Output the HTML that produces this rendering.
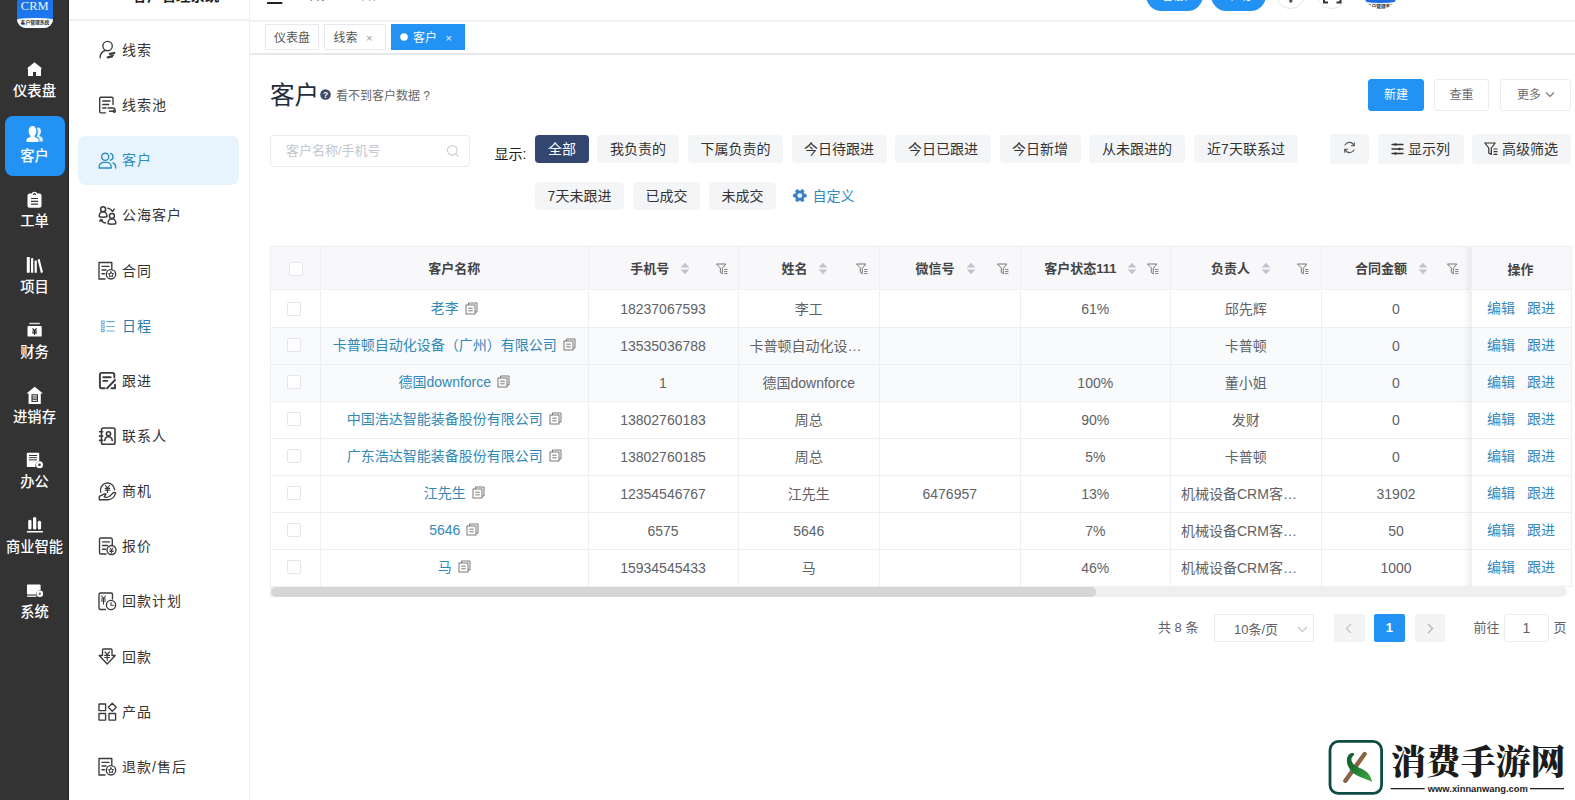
<!DOCTYPE html>
<html lang="zh-CN">
<head>
<meta charset="utf-8">
<title>客户 - CRM客户管理系统</title>
<style>
*{box-sizing:border-box;margin:0;padding:0}
html,body{width:1575px;height:800px;overflow:hidden;background:#fff}
body{position:relative;font-family:"Liberation Sans","Noto Sans CJK SC",sans-serif;font-size:14px;color:#606266;-webkit-font-smoothing:antialiased}
.abs{position:absolute}
svg{display:block;overflow:visible}
/* ---------- dark rail ---------- */
#rail{position:absolute;left:0;top:0;width:69px;height:800px;background:#333;border-right:1px solid #242424}
#rail .logo{position:absolute;left:17px;top:-8px;width:35.500px;height:36px;border-radius:0 0 9px 9px;background:#f8f9fb;overflow:hidden}
#rail .logo .b{position:absolute;left:0;top:0;width:35.500px;height:29px;color:#eaf6ff;font-family:"Liberation Serif",serif;font-size:12.500px;line-height:28.500px;text-align:center;background:linear-gradient(#1f6be0,#1b7af2)}
#rail .logo .t{position:absolute;left:-6px;top:25.500px;width:47.500px;height:14px;border-radius:50%/4px 4px 0 0;background:#f8f9fb;font-size:4.800px;font-weight:bold;line-height:9.500px;text-align:center;color:#333;white-space:nowrap}
.ri{position:absolute;left:4.500px;width:60px;height:60px;margin-top:.500px;border-radius:8px;color:#fff;text-align:center}
.ri.on{background:#2292f4}
.ri span{position:absolute;left:-6px;right:-6px;top:30.500px;font-size:14.300px;font-weight:500;line-height:20px;color:#fff;white-space:nowrap}
.ri svg{position:absolute;left:21px;top:8px;width:18px;height:18px;fill:#fff}
/* ---------- sub menu ---------- */
#menu{position:absolute;left:69px;top:0;width:181px;height:800px;background:#fff;border-right:1px solid #eef0f2}
#menu .hd{position:absolute;left:0;top:-30px;width:180px;height:51px;border-bottom:2px solid #eeeff1;font-size:14.500px;font-weight:bold;color:#222;line-height:20px}
#menu .hd span{position:absolute;left:63.500px;top:16px;white-space:nowrap}
.mi{position:absolute;left:9px;width:161px;height:48.500px;margin-top:1.500px;border-radius:8px;font-size:14px;line-height:48.500px;color:#333}
.mi.on{background:#e7f3fd;color:#2a8cc0}
.mi.blue{color:#2b7cb0}
.mi span{position:absolute;left:44px;top:0;white-space:nowrap;letter-spacing:1px}

/* ---------- main ---------- */
#main{position:absolute;left:250px;top:0;width:1325px;height:800px;background:#fff}
#main .abs{position:absolute}
.hline{position:absolute;left:0;right:0;height:2px;background:#eeeff1}
.pill{position:absolute;top:-20px;height:30.5px;border-radius:16px;background:#2292f4;color:#fff;font-size:13px;text-align:center;line-height:30px}
.circ{position:absolute;top:-19.500px;width:28.5px;height:28.5px;border-radius:50%;border:1px solid #e4e7ec;background:#fff}
.tab{position:absolute;top:24px;height:26px;border:1px solid #e7e9ec;background:#fff;font-size:12px;line-height:26.500px;color:#555;white-space:nowrap}
.tab.on{background:#2292f4;border-color:#2292f4;color:#fff}
.tab b{font-weight:normal;position:absolute;top:0}
.tab i{font-style:normal;position:absolute;top:0;font-size:11px;font-family:"Liberation Sans",sans-serif;color:#999}
.tab.on i{color:#e8f3ff}
.btn{position:absolute;height:32px;border-radius:3px;font-size:12px;line-height:30px;text-align:center;border:1px solid #e9ebef;color:#6a6d73;background:#fff;white-space:nowrap}
.btn.pri{background:#2292f4;border-color:#2292f4;color:#fff}
.chip{position:absolute;height:28px;border-radius:4px;background:#f4f5f7;color:#333;font-size:14px;line-height:28px;text-align:center;white-space:nowrap}
.chip.on{background:#324670;color:#fff}
.tool{position:absolute;top:134px;height:30px;border-radius:4px;background:#f4f5f7;color:#333;font-size:14px;line-height:30px;white-space:nowrap}

/* ---------- table ---------- */
#tb{position:absolute;left:20px;top:245.500px;width:1301.500px;height:341px;border:1px solid #edeff3;border-bottom:none;background:#fff;overflow:hidden;font-size:14px;color:#606266}
#tb .th{position:absolute;left:0;top:0;width:100%;height:43.500px;background:#f8f8fa;border-bottom:1px solid #edeff3}
#tb .tr{position:absolute;left:0;width:100%;height:36.950px;border-bottom:1px solid #edeff3;background:#fff}
#tb .tr.s,#tb .tr.s .c8{background:#f9fafc}
#tb .c{position:absolute;top:0;height:100%;border-right:1px solid #edeff3;text-align:center;white-space:nowrap;overflow:hidden}
#tb .tr .c{line-height:36.900px}
#tb .tr .c.nm{line-height:35px;color:#3289b6}
#tb .th .c{line-height:43px;font-size:13px;font-weight:bold;color:#444}
.c0{left:0;width:50px}.c1{left:50px;width:267.500px}.c2{left:317.500px;width:150px}.c3{left:467.500px;width:141.500px}.c4{left:609px;width:140.500px}.c5{left:749.500px;width:150.500px}.c6{left:900px;width:150.500px}.c7{left:1050.500px;width:150px}
.c8{left:1200px;width:101px;border-right:none!important;border-left:1px solid #edeff3}
#tb .sh{position:absolute;left:1192px;top:0;width:8px;height:100%;background:linear-gradient(to right,rgba(0,0,0,0),rgba(0,0,0,.055));z-index:3}
#tb .tr .c8{background:#fff;color:#3489bd;line-height:35px;text-align:left}
#tb .th .c8{background:#f8f8fa;line-height:45px}
.cb{position:absolute;width:14px;height:14px;border:1px solid #e3e6ec;border-radius:2px;background:#fff}
.lab{position:absolute;top:0}
.sort{position:absolute;top:15.500px;width:10px;height:13px}
.flt{position:absolute;top:16px;width:12px;height:12px}
.cp{display:inline-block;vertical-align:-1.500px;margin-left:6px;width:13px;height:13px}
.cp svg{width:13px;height:13px}
.op a{position:absolute;top:0;color:#3489bd;text-decoration:none}

/* ---------- pagination ---------- */
.pg{position:absolute;top:614px;height:28px;font-size:13px;line-height:28px;color:#606266;white-space:nowrap}
.pgb{position:absolute;top:614px;width:30.500px;height:28px;border-radius:2px;background:#f4f4f5;text-align:center}
/* ---------- watermark ---------- */
#wm{position:absolute;left:1320px;top:732px;width:255px;height:68px}
</style>
</head>
<body>
<div id="rail">
  <div class="logo"><div class="b">CRM</div><div class="t"><svg class="abs" style="left:5.75px;top:.2px" width="36" height="8" viewBox="0 0 144 32"><text x="72" y="24" font-size="19.200" font-weight="bold" font-family="'Liberation Sans','Noto Sans CJK SC',sans-serif" fill="#333" text-anchor="middle">客户管理系统</text></svg></div></div>
  <div class="ri" style="top:50px"><span>仪表盘</span></div>
  <div class="ri on" style="top:115px"><span>客户</span></div>
  <div class="ri" style="top:180px"><span>工单</span></div>
  <div class="ri" style="top:246px"><span>项目</span></div>
  <div class="ri" style="top:311px"><span>财务</span></div>
  <div class="ri" style="top:376px"><span>进销存</span></div>
  <div class="ri" style="top:441px"><span>办公</span></div>
  <div class="ri" style="top:506px"><span>商业智能</span></div>
  <div class="ri" style="top:571px"><span>系统</span></div>
  <svg class="abs" style="left:0;top:0" width="69" height="800" viewBox="0 0 69 800" fill="#fff">
    <!-- home -->
    <path d="M34.5 62.2 L42.2 68.6 L41 68.6 L41 76 L36 76 L36 72 L33 72 L33 76 L28 76 L28 68.6 L26.8 68.6 Z"/>
    <!-- users -->
    <path d="M38.2 127.6c1.7 0 2.8 1.6 2.8 3.8 0 1.5-.6 2.9-1.4 3.7v1c1.7.6 3.2 1.5 3.2 3.1v2.4h-3.4v-1.6c0-1.7-1.4-2.7-3-3.4.9-1.300 1.400-3 1.400-4.600 0-1.500-.3-2.900-.9-3.900.4-.3.8-.5 1.300-.5z" opacity=".85"/>
    <path d="M32.500 126c2.300 0 3.900 2.100 3.900 5 0 2-.8 3.800-1.900 4.800v1.100c2.300.7 4.100 1.700 4.100 3.600v1.500H26.400v-1.500c0-1.900 1.800-2.900 4.100-3.600v-1.100c-1.100-1-1.900-2.800-1.900-4.800 0-2.900 1.600-5 3.900-5z"/>
    <!-- clipboard -->
    <path d="M29.500 193.500h2.200c.4-1 1.500-1.700 2.800-1.700s2.400.7 2.800 1.700h2.200c1.100 0 2 .9 2 2v10.300c0 1.100-.9 2-2 2h-10c-1.100 0-2-.9-2-2v-10.300c0-1.100.9-2 2-2z"/>
    <g stroke="#333" stroke-width="1.200" fill="none"><path d="M31 198.500h7M31 201.300h7M31 204.100h7"/><path d="M33 194.800l1.500-1.300 1.500 1.300" stroke-width="1.100"/></g>
    <!-- books -->
    <rect x="26.800" y="257" width="3" height="15.800" rx=".5"/><rect x="31" y="258" width="2.200" height="14.800" rx=".4"/><rect x="34.600" y="260.500" width="2.200" height="12.300" rx=".4"/>
    <path d="M37.600 259.600l2-.7 3.400 13.300-2.100.7z"/>
    <!-- finance -->
    <rect x="29.300" y="322.800" width="10.600" height="1.500" rx=".4" opacity=".8"/>
    <path d="M28.400 326h12.400c.5 0 .9.400.9.900v8.800c0 .5-.4.900-.9.900H28.400c-.5 0-.9-.4-.9-.9v-8.800c0-.5.400-.9.900-.9z"/>
    <g stroke="#222" stroke-width="1.150" fill="none"><path d="M32.600 328.300l2 2.300 2-2.300M32.200 331h4.800M32.200 332.800h4.800M34.600 330.500v4.500"/></g>
    <!-- warehouse -->
    <path d="M34.700 386.800l8.300 6.700h-2.200v10.600H28.600v-10.600h-2.200z"/>
    <g stroke="#333" stroke-width="1.200" fill="none"><rect x="32" y="394.800" width="5.400" height="6.600" stroke-width="1.100"/><path d="M32 397h5.400M32 399.200h5.400"/></g>
    <!-- office -->
    <path d="M27.800 452.800h10.400c.6 0 1 .4 1 1v7.500a4.300 4.300 0 0 0-3.600 5.700H27.800c-.6 0-1-.4-1-1v-12.200c0-.6.400-1 1-1z"/>
    <g stroke="#333" stroke-width="1" fill="none"><path d="M29 455.500h8M29 457.700h8M29 459.900h8"/></g>
    <circle cx="39.500" cy="464.700" r="3.500" fill="#fff"/><circle cx="39.500" cy="464.700" r="1.300" fill="#333"/>
    <!-- BI -->
    <rect x="28.200" y="519.800" width="3.300" height="9.600" rx="1.500"/><rect x="33" y="517" width="3.300" height="12.400" rx="1.500"/><rect x="37.800" y="520.800" width="3.300" height="8.600" rx="1.500"/>
    <rect x="26.800" y="531" width="16.200" height="1.400" rx=".5"/>
    <!-- system -->
    <path d="M28 584.600h11.600c.6 0 1 .4 1 1v4.600a4.200 4.200 0 0 0-4.600 4.300H28c-.6 0-1-.4-1-1v-7.900c0-.6.400-1 1-1z"/>
    <rect x="27" y="595.600" width="9.500" height="1.300" rx=".4" opacity=".85"/>
    <circle cx="39.800" cy="593.800" r="3.300"/><circle cx="39.800" cy="593.800" r="1.200" fill="#333" opacity=".7"/>
  </svg>
</div>
<div id="menu">
  <div class="hd"><span>客户管理系统</span></div>
  <div class="mi " style="top:24.40px"><span>线索</span></div>
  <div class="mi " style="top:79.55px"><span>线索池</span></div>
  <div class="mi on" style="top:134.70px"><span>客户</span></div>
  <div class="mi " style="top:189.85px"><span>公海客户</span></div>
  <div class="mi " style="top:245.00px"><span>合同</span></div>
  <div class="mi blue" style="top:300.15px"><span>日程</span></div>
  <div class="mi " style="top:355.30px"><span>跟进</span></div>
  <div class="mi " style="top:410.45px"><span>联系人</span></div>
  <div class="mi " style="top:465.60px"><span>商机</span></div>
  <div class="mi " style="top:520.75px"><span>报价</span></div>
  <div class="mi " style="top:575.90px"><span>回款计划</span></div>
  <div class="mi " style="top:631.05px"><span>回款</span></div>
  <div class="mi " style="top:686.20px"><span>产品</span></div>
  <div class="mi " style="top:741.35px"><span>退款/售后</span></div>
</div>
<svg id="micons" class="abs" style="left:0;top:0" width="250" height="800" viewBox="0 0 250 800" fill="none" stroke="#3a3a3a" stroke-width="1.350" stroke-linecap="round" stroke-linejoin="round">
  <g transform="translate(98.5,41)"><circle cx="9.100" cy="5" r="4.700"/><path d="M1.600 16.800c0-3.800 2-6.300 5-7.300"/><g stroke-width="2.100"><path d="M11.500 12.900l4.200-.9M9.300 16.300l4.200-.9" stroke-width="2.300"/><path d="M12.800 14.600l2.300-.5" stroke-width="1.400"/></g></g>
  <g transform="translate(98.5,96)"><path d="M14.500 8.500V2.200a1 1 0 0 0-1-1H2.200a1 1 0 0 0-1 1v13.600a1 1 0 0 0 1 1H7"/><path d="M4.200 5h7.300M4.200 8.500h6M4.200 12h3.300"/><path d="M9.500 12h5.300a1.500 1.500 0 0 1 0 3.200M11 15.200h3.500"/><circle cx="15.800" cy="15.300" r="1.100"/></g>
  <g transform="translate(98,152)" stroke="#2a8cc0"><circle cx="7.200" cy="4.800" r="3.600"/><path d="M1.200 16v-1.300a4.300 4.300 0 0 1 4.300-4.300h3.400a4.300 4.300 0 0 1 4.300 4.300V16z"/><path d="M12.600 1.400a3.600 3.600 0 0 1 0 6.800M15 10.800a4.300 4.300 0 0 1 2.600 3.900V16"/></g>
  <g transform="translate(98.5,206.5)" stroke-width="1.500"><circle cx="4.600" cy="2.700" r="2.500"/><path d="M.8 10.200c-.5-2.800 1.500-5 3.800-5s4.300 2.200 3.800 5c-2.500.6-5.100.6-7.600 0z"/><circle cx="13.400" cy="9.500" r="2.500"/><path d="M9.600 17.200c-.5-2.800 1.500-5 3.800-5s4.300 2.200 3.800 5c-2.500.6-5.100.6-7.600 0z"/><path d="M9.200 1.600c2.100.3 3.800 1.500 4.800 3.300M12.700 3.600l1.300 1.500 1.700-2.600M7 16.500c-2.100-.3-3.700-1.400-4.500-3.300M1.200 14.800l1.200-1.900 1.600.9" stroke-width="1.400"/></g>
  <g transform="translate(98,261.5)"><path d="M13.800 7.500V1H1v16.500h6"/><path d="M4 4.800h7M4 8.500h4M4 12.200h2.500"/><circle cx="13" cy="12.800" r="4.700" fill="#fff"/><path d="M13 10.300l.8 1.700 1.800.2-1.300 1.300.3 1.800-1.600-.9-1.600.9.300-1.800-1.300-1.300 1.800-.2z" stroke-width="1"/></g>
  <g transform="translate(99,317)" stroke="#6bb0dc"><g stroke-width="1.100"><rect x="2.600" y="4" width="2.600" height="2.600"/><rect x="2.600" y="8.200" width="2.600" height="2.600"/><rect x="2.600" y="12.400" width="2.600" height="2.200"/><path d="M7.800 4.600h7.500M7.800 9.500h7.500M7.800 14h7.500"/></g></g>
  <g transform="translate(98.5,371.5)"><g stroke-width="1.900"><path d="M15.800 6V3a1.600 1.600 0 0 0-1.600-1.600H3A1.600 1.600 0 0 0 1.400 3v12.200A1.600 1.600 0 0 0 3 16.800h3.200"/><path d="M4.800 5.800h7.400M4.800 9.400h4"/><path d="M8.500 16.800l8-8.300M13 16.800h3.500v-3.500"/></g></g>
  <g transform="translate(98.5,427)"><g stroke-width="1.600"><rect x="3" y="1" width="13.500" height="16.200" rx="1.800"/><path d="M1 4.800h3.200M1 9.100h3.200M1 13.400h3.200"/><circle cx="10" cy="6.800" r="2.100"/><path d="M6.300 13.500a3.700 3.700 0 0 1 7.400 0"/></g></g>
  <g transform="translate(98,482)"><path d="M2.800 10.400A7.100 7.100 0 1 1 16.600 7.600"/><path d="M7.500 3.500l2 2.500 2-2.500M7.300 6.300h4.400M7.300 8.200h4.400M9.500 6v4.400" stroke-width="1.200"/><path d="M1.300 14.300v3.400H10c3.500 0 6.500-2.800 7.700-6.800-.8-.8-2-.6-2.800.2-2.400 2.700-4.900 4.400-7.400 4.400l-1.300-.9 1.900-2.400-1.600-.4z"/></g>
  <g transform="translate(98.5,537)"><path d="M13.800 8V2.500A1.500 1.500 0 0 0 12.300 1H2.500A1.500 1.500 0 0 0 1 2.500v13A1.500 1.500 0 0 0 2.500 17H7.500"/><path d="M4 4.800h7M4 8.500h5M4 12.200h3"/><circle cx="13" cy="13" r="4.500" fill="#fff"/><path d="M11.500 10.800l1.500 1.800 1.500-1.800M11.300 13h3.400M11.300 14.500h3.400M13 12.600v3.400" stroke-width="1"/></g>
  <g transform="translate(98,592)"><path d="M14.500 7V2.500A1.500 1.500 0 0 0 13 1H2.500A1.500 1.500 0 0 0 1 2.500V16a1.500 1.500 0 0 0 1.500 1.500H7.500"/><path d="M3.500 4l2 2.500 2-2.500M3.300 7h4.400M3.300 9h4.400M5.500 6.500V12" stroke-width="1.100"/><circle cx="13" cy="13" r="4.600" fill="#fff"/><path d="M13 10.500V13.300h2.300" stroke-width="1.100"/></g>
  <g transform="translate(98,647.5)"><path d="M5.500 1.500h7.500a1 1 0 0 1 1 1V8h3.200L9.200 16.500 1.200 8H4.500V2.500a1 1 0 0 1 1-1z"/><path d="M7 4.500l2.200 2.700 2.200-2.700M6.700 7.800h5M6.700 10h5M9.200 7.200v5.500" stroke-width="1.200"/></g>
  <g transform="translate(98,702.5)"><rect x="1" y="1.500" width="6.600" height="6.600"/><rect x="1" y="11" width="6.600" height="6.600"/><rect x="11" y="11" width="6.600" height="6.600"/><path d="M14.300 .8l4 4-4 4-4-4z"/></g>
  <g transform="translate(98,757.5)"><path d="M13.800 7.500V1H1v16.500h6"/><path d="M4 4.800h7M4 8.500h4M4 12.200h2.500"/><circle cx="13" cy="12.800" r="4.700" fill="#fff"/><path d="M13 10.300l.8 1.700 1.800.2-1.300 1.300.3 1.800-1.600-.9-1.600.9.300-1.800-1.300-1.300 1.800-.2z" stroke-width="1"/></g>
</svg>
<div id="main">
  <!-- cropped top header -->
  <svg class="abs" style="left:17.200px;top:0" width="18" height="5" viewBox="0 0 18 5"><rect x="0" y="1.900" width="15.400" height="2" rx=".5" fill="#222"/></svg>
  <div class="abs" style="left:57.500px;top:-15px;font-size:14px;line-height:18px;color:#333;white-space:nowrap">客户</div><div class="abs" style="left:90px;top:-17px;font-size:14px;line-height:18px;color:#bbb">/</div><div class="abs" style="left:109px;top:-15px;font-size:14px;line-height:18px;color:#999;white-space:nowrap">客户</div>
  <div class="pill" style="left:896px;width:56.500px">客服</div>
  <div class="pill" style="left:961px;width:55px">帮助</div>
  <div class="circ" style="left:1026px"><svg class="abs" style="left:10px;top:15.500px" width="8" height="8" viewBox="0 0 8 8"><circle cx="3.800" cy="4" r="1.700" fill="#555"/></svg></div>
  <div class="circ" style="left:1067px"><svg class="abs" style="left:4.500px;top:17.500px" width="20" height="6" viewBox="0 0 20 6"><path d="M0 0h2v2.500h3v2H0zM18.500 0h-2v2.500h-3v2h5z" fill="#333"/></svg></div>
  <div class="abs" style="left:1113px;top:-26.500px;width:35px;height:35px;border-radius:50%;background:#f6f7f9;overflow:hidden"><div style="position:absolute;left:-5px;top:0;width:45px;height:29.500px;border-radius:0 0 22px 22px/0 0 5px 5px;background:#1f6de0"></div><div style="position:absolute;left:-5px;top:29.500px;width:45px;height:6px"><svg class="abs" style="left:4.5px;top:-1px" width="36" height="8" viewBox="0 0 144 32"><text x="72" y="24" font-size="19.200" font-weight="bold" font-family="'Liberation Sans','Noto Sans CJK SC',sans-serif" fill="#333" text-anchor="middle">客户管理系统</text></svg></div></div>
  <div class="hline" style="top:20.400px;background:#f1f2f4"></div>
  <!-- tabs -->
  <div class="tab" style="left:14.500px;width:54.500px"><b style="left:8.500px">仪表盘</b></div>
  <div class="tab" style="left:74px;width:61.500px"><b style="left:8.500px">线索</b><i style="left:41px">×</i></div>
  <div class="tab on" style="left:141px;width:74px"><svg class="abs" style="left:7.500px;top:8px" width="8" height="8" viewBox="0 0 8 8"><circle cx="4" cy="4" r="3.800" fill="#fff"/></svg><b style="left:21px">客户</b><i style="left:53.500px">×</i></div>
  <div class="hline" style="top:53px;background:#e6e8eb"></div>
  <!-- title row -->
  <div class="abs" style="left:20px;top:79px;font-size:24.600px;line-height:34px;color:#1f2d3d;white-space:nowrap">客户</div>
  <svg class="abs" style="left:70px;top:88.500px" width="11" height="11" viewBox="0 0 11 11"><circle cx="5.500" cy="5.500" r="5.300" fill="#3d4b66"/><text x="5.500" y="8.600" font-size="8.500" font-weight="bold" font-family="Liberation Sans, sans-serif" fill="#fff" text-anchor="middle">?</text></svg>
  <div class="abs" style="left:86px;top:87px;font-size:12px;line-height:18px;color:#666;white-space:nowrap">看不到客户数据&nbsp;?</div>
  <div class="btn pri" style="left:1118px;top:79px;width:56px">新建</div>
  <div class="btn" style="left:1184px;top:79px;width:55px">查重</div>
  <div class="btn" style="left:1250px;top:79px;width:71px;text-align:left;padding-left:16px">更多<svg class="abs" style="left:44px;top:11px" width="10" height="8" viewBox="0 0 10 8"><path d="M1 1.500l4 4 4-4" fill="none" stroke="#777" stroke-width="1.100"/></svg></div>
  <!-- search + filters -->
  <div class="abs" style="left:20px;top:134.500px;width:200px;height:32px;border:1px solid #e9ebef;border-radius:4px;background:#fff"><span style="position:absolute;left:15px;top:0;line-height:30px;font-size:13px;color:#c3c6cc;white-space:nowrap">客户名称/手机号</span><svg class="abs" style="left:175px;top:8px" width="14" height="14" viewBox="0 0 14 14"><circle cx="6.300" cy="6.300" r="4.800" fill="none" stroke="#c8cbd1" stroke-width="1.100"/><path d="M9.800 9.800l2.400 2.400" stroke="#c8cbd1" stroke-width="1.100" stroke-linecap="round"/></svg></div>
  <div class="abs" style="left:244.500px;top:144px;font-size:14px;line-height:20px;color:#1a1a1a;white-space:nowrap">显示:</div>
  <div class="chip on" style="left:285px;top:134.500px;width:54px">全部</div>
  <div class="chip" style="left:347px;top:134.500px;width:82px">我负责的</div>
  <div class="chip" style="left:438px;top:134.500px;width:95px">下属负责的</div>
  <div class="chip" style="left:541.500px;top:134.500px;width:95px">今日待跟进</div>
  <div class="chip" style="left:645px;top:134.500px;width:96px">今日已跟进</div>
  <div class="chip" style="left:749.500px;top:134.500px;width:81px">今日新增</div>
  <div class="chip" style="left:839px;top:134.500px;width:96px">从未跟进的</div>
  <div class="chip" style="left:944px;top:134.500px;width:104px">近7天联系过</div>
  <div class="chip" style="left:285px;top:182px;width:89px">7天未跟进</div>
  <div class="chip" style="left:383px;top:182px;width:67px">已成交</div>
  <div class="chip" style="left:459px;top:182px;width:67px">未成交</div>
  <div class="abs" style="left:543px;top:186px;font-size:14px;line-height:20px;color:#3489bf;white-space:nowrap"><svg class="abs" style="left:0;top:3px" width="14" height="13" viewBox="0 0 14 13"><path d="M11.24 5.07L13.18 5.36L13.18 7.84L11.24 8.13L10.35 9.68L11.06 11.51L8.92 12.75L7.70 11.21L5.90 11.21L4.68 12.75L2.54 11.51L3.25 9.68L2.36 8.13L0.42 7.84L0.42 5.36L2.36 5.07L3.25 3.52L2.54 1.69L4.68 0.45L5.90 1.99L7.70 1.99L8.92 0.45L11.06 1.69L10.35 3.52z" fill="#3d7fc4" stroke="#3d7fc4" stroke-width=".8" stroke-linejoin="round"/><circle cx="6.800" cy="6.600" r="2.400" fill="#e4f5ff"/></svg><span style="margin-left:19.500px">自定义</span></div>
  <div class="tool" style="left:1080px;width:39px"><svg class="abs" style="left:13px;top:7px" width="13" height="13" viewBox="0 0 13 13" fill="none" stroke="#555" stroke-width="1.100" stroke-linecap="round"><path d="M11 4.500A5 5 0 0 0 2 4M2 8.500a5 5 0 0 0 9 .5"/><path d="M11.300 1.800v2.900H8.400M1.700 11.200V8.300h2.900"/></svg></div>
  <div class="tool" style="left:1128px;width:86px"><svg class="abs" style="left:13px;top:9px" width="13" height="12" viewBox="0 0 13 12" fill="none" stroke="#333" stroke-width="1.300" stroke-linecap="round"><path d="M1 1.500h11M1 6h11M1 10.500h11"/><g fill="#333" stroke="none"><circle cx="4.500" cy="1.500" r="1.200"/><circle cx="8.500" cy="6" r="1.200"/><circle cx="4.500" cy="10.500" r="1.200"/></g></svg><span style="position:absolute;left:30px">显示列</span></div>
<div id="tb"><div class="sh"></div><div class="th"><div class="c c0"><span class="cb" style="left:17.500px;top:15px"></span></div><div class="c c1"><span class="lab" style="left:107.3px">客户名称</span></div><div class="c c2"><span class="lab" style="left:41.7px">手机号</span><svg class="sort" style="left:91.3px" viewBox="0 0 10 13"><path d="M5 .8L9.300 5.500H.7z" fill="#c0c4cc"/><path d="M5 12.200L9.300 7.500H.7z" fill="#c0c4cc"/></svg><svg class="flt" style="left:127.5px" viewBox="0 0 12 12" fill="none" stroke="#777" stroke-width="1" stroke-linejoin="round" stroke-linecap="round"><path d="M.8 1h9L6.300 5.300v5.500L4.300 9.500V5.300z"/><path d="M8.500 6.500h2.500M8.500 8.500h2.500M8.500 10.500h2.500" stroke-width=".9"/></svg></div><div class="c c3"><span class="lab" style="left:43.1px">姓名</span><svg class="sort" style="left:79.7px" viewBox="0 0 10 13"><path d="M5 .8L9.300 5.500H.7z" fill="#c0c4cc"/><path d="M5 12.200L9.300 7.500H.7z" fill="#c0c4cc"/></svg><svg class="flt" style="left:117.3px" viewBox="0 0 12 12" fill="none" stroke="#777" stroke-width="1" stroke-linejoin="round" stroke-linecap="round"><path d="M.8 1h9L6.300 5.300v5.500L4.300 9.500V5.300z"/><path d="M8.500 6.500h2.500M8.500 8.500h2.500M8.500 10.500h2.500" stroke-width=".9"/></svg></div><div class="c c4"><span class="lab" style="left:35.5px">微信号</span><svg class="sort" style="left:85.5px" viewBox="0 0 10 13"><path d="M5 .8L9.300 5.500H.7z" fill="#c0c4cc"/><path d="M5 12.200L9.300 7.500H.7z" fill="#c0c4cc"/></svg><svg class="flt" style="left:116.8px" viewBox="0 0 12 12" fill="none" stroke="#777" stroke-width="1" stroke-linejoin="round" stroke-linecap="round"><path d="M.8 1h9L6.300 5.300v5.500L4.300 9.500V5.300z"/><path d="M8.500 6.500h2.500M8.500 8.500h2.500M8.500 10.500h2.500" stroke-width=".9"/></svg></div><div class="c c5"><span class="lab" style="left:23.8px">客户状态111</span><svg class="sort" style="left:106.9px" viewBox="0 0 10 13"><path d="M5 .8L9.300 5.500H.7z" fill="#c0c4cc"/><path d="M5 12.200L9.300 7.500H.7z" fill="#c0c4cc"/></svg><svg class="flt" style="left:126.3px" viewBox="0 0 12 12" fill="none" stroke="#777" stroke-width="1" stroke-linejoin="round" stroke-linecap="round"><path d="M.8 1h9L6.300 5.300v5.500L4.300 9.500V5.300z"/><path d="M8.500 6.500h2.500M8.500 8.500h2.500M8.500 10.500h2.500" stroke-width=".9"/></svg></div><div class="c c6"><span class="lab" style="left:40px">负责人</span><svg class="sort" style="left:89.9px" viewBox="0 0 10 13"><path d="M5 .8L9.300 5.500H.7z" fill="#c0c4cc"/><path d="M5 12.200L9.300 7.500H.7z" fill="#c0c4cc"/></svg><svg class="flt" style="left:126px" viewBox="0 0 12 12" fill="none" stroke="#777" stroke-width="1" stroke-linejoin="round" stroke-linecap="round"><path d="M.8 1h9L6.300 5.300v5.500L4.300 9.500V5.300z"/><path d="M8.500 6.500h2.500M8.500 8.500h2.500M8.500 10.500h2.500" stroke-width=".9"/></svg></div><div class="c c7"><span class="lab" style="left:33.5px">合同金额</span><svg class="sort" style="left:96.5px" viewBox="0 0 10 13"><path d="M5 .8L9.300 5.500H.7z" fill="#c0c4cc"/><path d="M5 12.200L9.300 7.500H.7z" fill="#c0c4cc"/></svg><svg class="flt" style="left:125.7px" viewBox="0 0 12 12" fill="none" stroke="#777" stroke-width="1" stroke-linejoin="round" stroke-linecap="round"><path d="M.8 1h9L6.300 5.300v5.500L4.300 9.500V5.300z"/><path d="M8.500 6.500h2.500M8.500 8.500h2.500M8.500 10.500h2.500" stroke-width=".9"/></svg></div><div class="c c8"><span class="lab" style="left:35.5px">操作</span></div></div>
<div class="tr" style="top:44.50px"><div class="c c0"><span class="cb" style="left:15.500px;top:10.500px"></span></div><div class="c c1 nm">老李<span class="cp"><svg viewBox="0 0 13 13" fill="none" stroke="#6a6a6a" stroke-width=".9"><path d="M3.500 3V1h8.500v9H10"/><rect x="1" y="3" width="9" height="9"/><path d="M3.300 6.200h4.400M3.300 8.800h4.400"/></svg></span></div><div class="c c2">18237067593</div><div class="c c3">李工</div><div class="c c4"></div><div class="c c5">61%</div><div class="c c6">邱先辉</div><div class="c c7">0</div><div class="c c8 op"><a style="left:15px">编辑</a><a style="left:55px">跟进</a></div></div>
<div class="tr s" style="top:81.45px"><div class="c c0"><span class="cb" style="left:15.500px;top:10.500px"></span></div><div class="c c1 nm">卡普顿自动化设备（广州）有限公司<span class="cp"><svg viewBox="0 0 13 13" fill="none" stroke="#6a6a6a" stroke-width=".9"><path d="M3.500 3V1h8.500v9H10"/><rect x="1" y="3" width="9" height="9"/><path d="M3.300 6.200h4.400M3.300 8.800h4.400"/></svg></span></div><div class="c c2">13535036788</div><div class="c c3" style="text-align:left;padding-left:11px">卡普顿自动化设…</div><div class="c c4"></div><div class="c c5"></div><div class="c c6">卡普顿</div><div class="c c7">0</div><div class="c c8 op"><a style="left:15px">编辑</a><a style="left:55px">跟进</a></div></div>
<div class="tr s" style="top:118.40px"><div class="c c0"><span class="cb" style="left:15.500px;top:10.500px"></span></div><div class="c c1 nm">德国downforce<span class="cp"><svg viewBox="0 0 13 13" fill="none" stroke="#6a6a6a" stroke-width=".9"><path d="M3.500 3V1h8.500v9H10"/><rect x="1" y="3" width="9" height="9"/><path d="M3.300 6.200h4.400M3.300 8.800h4.400"/></svg></span></div><div class="c c2">1</div><div class="c c3">德国downforce</div><div class="c c4"></div><div class="c c5">100%</div><div class="c c6">董小姐</div><div class="c c7">0</div><div class="c c8 op"><a style="left:15px">编辑</a><a style="left:55px">跟进</a></div></div>
<div class="tr" style="top:155.35px"><div class="c c0"><span class="cb" style="left:15.500px;top:10.500px"></span></div><div class="c c1 nm">中国浩达智能装备股份有限公司<span class="cp"><svg viewBox="0 0 13 13" fill="none" stroke="#6a6a6a" stroke-width=".9"><path d="M3.500 3V1h8.500v9H10"/><rect x="1" y="3" width="9" height="9"/><path d="M3.300 6.200h4.400M3.300 8.800h4.400"/></svg></span></div><div class="c c2">13802760183</div><div class="c c3">周总</div><div class="c c4"></div><div class="c c5">90%</div><div class="c c6">发财</div><div class="c c7">0</div><div class="c c8 op"><a style="left:15px">编辑</a><a style="left:55px">跟进</a></div></div>
<div class="tr" style="top:192.30px"><div class="c c0"><span class="cb" style="left:15.500px;top:10.500px"></span></div><div class="c c1 nm">广东浩达智能装备股份有限公司<span class="cp"><svg viewBox="0 0 13 13" fill="none" stroke="#6a6a6a" stroke-width=".9"><path d="M3.500 3V1h8.500v9H10"/><rect x="1" y="3" width="9" height="9"/><path d="M3.300 6.200h4.400M3.300 8.800h4.400"/></svg></span></div><div class="c c2">13802760185</div><div class="c c3">周总</div><div class="c c4"></div><div class="c c5">5%</div><div class="c c6">卡普顿</div><div class="c c7">0</div><div class="c c8 op"><a style="left:15px">编辑</a><a style="left:55px">跟进</a></div></div>
<div class="tr" style="top:229.25px"><div class="c c0"><span class="cb" style="left:15.500px;top:10.500px"></span></div><div class="c c1 nm">江先生<span class="cp"><svg viewBox="0 0 13 13" fill="none" stroke="#6a6a6a" stroke-width=".9"><path d="M3.500 3V1h8.500v9H10"/><rect x="1" y="3" width="9" height="9"/><path d="M3.300 6.200h4.400M3.300 8.800h4.400"/></svg></span></div><div class="c c2">12354546767</div><div class="c c3">江先生</div><div class="c c4">6476957</div><div class="c c5">13%</div><div class="c c6" style="text-align:left;padding-left:10px">机械设备CRM客…</div><div class="c c7">31902</div><div class="c c8 op"><a style="left:15px">编辑</a><a style="left:55px">跟进</a></div></div>
<div class="tr" style="top:266.20px"><div class="c c0"><span class="cb" style="left:15.500px;top:10.500px"></span></div><div class="c c1 nm">5646<span class="cp"><svg viewBox="0 0 13 13" fill="none" stroke="#6a6a6a" stroke-width=".9"><path d="M3.500 3V1h8.500v9H10"/><rect x="1" y="3" width="9" height="9"/><path d="M3.300 6.200h4.400M3.300 8.800h4.400"/></svg></span></div><div class="c c2">6575</div><div class="c c3">5646</div><div class="c c4"></div><div class="c c5">7%</div><div class="c c6" style="text-align:left;padding-left:10px">机械设备CRM客…</div><div class="c c7">50</div><div class="c c8 op"><a style="left:15px">编辑</a><a style="left:55px">跟进</a></div></div>
<div class="tr" style="top:303.15px"><div class="c c0"><span class="cb" style="left:15.500px;top:10.500px"></span></div><div class="c c1 nm">马<span class="cp"><svg viewBox="0 0 13 13" fill="none" stroke="#6a6a6a" stroke-width=".9"><path d="M3.500 3V1h8.500v9H10"/><rect x="1" y="3" width="9" height="9"/><path d="M3.300 6.200h4.400M3.300 8.800h4.400"/></svg></span></div><div class="c c2">15934545433</div><div class="c c3">马</div><div class="c c4"></div><div class="c c5">46%</div><div class="c c6" style="text-align:left;padding-left:10px">机械设备CRM客…</div><div class="c c7">1000</div><div class="c c8 op"><a style="left:15px">编辑</a><a style="left:55px">跟进</a></div></div>
</div>
<div class="abs" style="left:20px;top:587px;width:1297px;height:9.500px;background:#efefef;border-radius:0 5px 5px 0"></div>
<div class="abs" style="left:20.500px;top:587px;width:825px;height:9.500px;background:#d6d6d6;border-radius:5px"></div>
  <div class="pg" style="left:908px">共 8 条</div>
  <div class="pg" style="left:963.500px;width:100.500px;border:1px solid #e9ebef;border-radius:3px;line-height:29px"><span style="position:absolute;left:19.500px">10条/页</span><svg class="abs" style="left:82px;top:11px" width="11" height="7" viewBox="0 0 11 7"><path d="M1 1l4.500 4.500L10 1" fill="none" stroke="#c0c4cc" stroke-width="1.100"/></svg></div>
  <div class="pgb" style="left:1084px"><svg class="abs" style="left:11px;top:8.500px" width="8" height="11" viewBox="0 0 8 11"><path d="M6 1L1.500 5.500 6 10" fill="none" stroke="#c0c4cc" stroke-width="1.300"/></svg></div>
  <div class="pgb" style="left:1124px;background:#2292f4;color:#fff;font-weight:bold;font-size:13px;line-height:28px">1</div>
  <div class="pgb" style="left:1164.500px"><svg class="abs" style="left:11.500px;top:8.500px" width="8" height="11" viewBox="0 0 8 11"><path d="M2 1l4.500 4.500L2 10" fill="none" stroke="#b0b3b9" stroke-width="1.300"/></svg></div>
  <div class="pg" style="left:1223.500px">前往</div>
  <div class="pg" style="left:1254px;width:45px;border:1px solid #e9ebef;border-radius:3px;text-align:center;line-height:26px;font-size:14px">1</div>
  <div class="pg" style="left:1303.500px">页</div>
  <div class="tool" style="left:1222px;width:99px"><svg class="abs" style="left:12px;top:8px" width="14" height="14" viewBox="0 0 14 14" fill="none" stroke="#333" stroke-width="1.200" stroke-linejoin="round" stroke-linecap="round"><path d="M.8 1h10.400L7.300 6v6.500L4.800 11V6z"/><path d="M10 7h3M10 9.700h3M10 12.400h3"/></svg><span style="position:absolute;left:30px">高级筛选</span></div>
</div>
<div id="wm">
  <svg class="abs" style="left:0;top:0" width="255" height="68" viewBox="0 0 255 68">
    <defs><linearGradient id="lf" x1="0" y1="0" x2="1" y2="1"><stop offset="0" stop-color="#125a2c"/><stop offset=".45" stop-color="#1f7a35"/><stop offset="1" stop-color="#3fae3f"/></linearGradient></defs>
    <rect x="10" y="9.400" width="51.600" height="52" rx="8.500" fill="#fff" stroke="#0f4a45" stroke-width="2.800"/>
    <path d="M44.600 22L25.400 48.800" stroke="#8a6443" stroke-width="4.400" stroke-linecap="round" fill="none"/>
    <path d="M33.500 21.300C31 20.300 27.500 22.500 27 27c-.5 5 1.500 9 4.500 12.500C36 44.500 45 46 52.200 50c-1.200-5-3.200-8.500-6.700-11C41 36 36 35 33 31.500c-2-2.500-2.500-5.500.5-8 1-.8 1-1.800 0-2.200z" fill="url(#lf)"/>
    <rect x="70.700" y="56" width="34" height="1.300" fill="#222"/><rect x="210" y="56" width="34" height="1.300" fill="#222"/>
    <text x="157.800" y="59.600" font-family="Liberation Sans, sans-serif" font-weight="bold" font-size="8.200" fill="#222" text-anchor="middle" textLength="100" lengthAdjust="spacingAndGlyphs">www.xinnanwang.com</text>
    <text x="71" y="41.500" font-family="'Liberation Serif', 'Noto Serif CJK SC', serif" font-weight="900" font-size="34.500" fill="#1c1c1c" textLength="174.500" lengthAdjust="spacingAndGlyphs">消费手游网</text>
  </svg>
</div>
</body>
</html>
